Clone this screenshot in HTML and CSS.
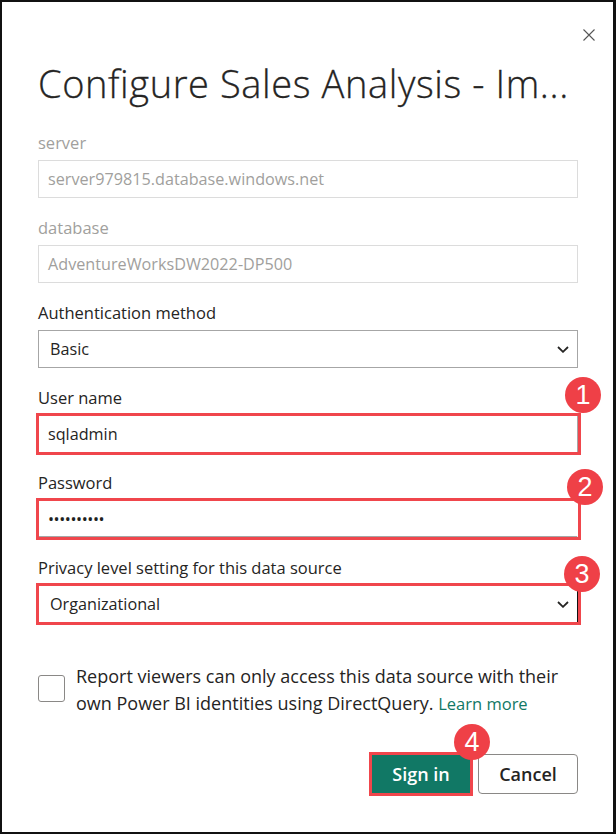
FILE: index.html
```html
<!DOCTYPE html>
<html lang="en">
<head>
<meta charset="utf-8">
<title>Configure Sales Analysis</title>
<link rel="stylesheet" href="styles.css">
</head>
<body>
<div class="dialog">
  <div class="close-row">
    <button class="close" aria-label="Close">
      <svg width="12" height="12" viewBox="0 0 12 12"><path d="M0.5 0.5 L11.5 11.5 M11.5 0.5 L0.5 11.5" stroke="#555" stroke-width="1.1" fill="none"/></svg>
    </button>
  </div>
  <h1 class="title">Configure Sales Analysis - Im...</h1>

  <div class="field">
    <div class="label muted">server</div>
    <div class="input disabled">server979815.database.windows.net</div>
  </div>
  <div class="field">
    <div class="label muted">database</div>
    <div class="input disabled">AdventureWorksDW2022-DP500</div>
  </div>
  <div class="field">
    <div class="label">Authentication method</div>
    <div class="input select">
      <span>Basic</span>
      <svg class="chev" width="12" height="7" viewBox="0 0 12 7"><path d="M1 1 L6 5.8 L11 1" stroke="#252423" stroke-width="1.8" fill="none"/></svg>
    </div>
  </div>
  <div class="field">
    <div class="label">User name</div>
    <div class="annot">
      <div class="input">sqladmin</div>
      <span class="hl"></span>
      <span class="badge b1">1</span>
    </div>
  </div>
  <div class="field">
    <div class="label">Password</div>
    <div class="annot">
      <div class="input password">••••••••••</div>
      <span class="hl"></span>
      <span class="badge b2">2</span>
    </div>
  </div>
  <div class="field">
    <div class="label">Privacy level setting for this data source</div>
    <div class="annot">
      <div class="input select focused">
        <span>Organizational</span>
        <svg class="chev" width="12" height="7" viewBox="0 0 12 7"><path d="M1 1 L6 5.8 L11 1" stroke="#252423" stroke-width="1.8" fill="none"/></svg>
      </div>
      <span class="hl"></span>
      <span class="badge b3">3</span>
    </div>
  </div>

  <div class="check-row">
    <span class="checkbox"></span>
    <p class="check-text">Report viewers can only access this data source with their own Power BI identities using DirectQuery. <a class="link" href="#">Learn more</a></p>
  </div>

  <div class="actions">
    <div class="annot">
      <button class="btn primary">Sign in</button>
      <span class="hl hl-btn"></span>
      <span class="badge b4">4</span>
    </div>
    <button class="btn secondary">Cancel</button>
  </div>
</div>
</body>
</html>
```

FILE: styles.css
```css
* { box-sizing: border-box; }
html, body { margin: 0; padding: 0; background: #fff; }
body { font-family: "Open Sans", "Noto Sans", sans-serif; color: #252423; }

.dialog {
  width: 616px;
  height: 834px;
  border: 2px solid #111;
  border-right-width: 3px;
  padding: 27px 35px 0 36px;
  display: flex;
  flex-direction: column;
  background: #fff;
}

.close-row { display: flex; justify-content: flex-end; height: 12px; margin-right: -17px; }
.close { border: 0; background: none; padding: 0; width: 12px; height: 12px; display: block; cursor: pointer; }
.close svg { display: block; }

.title {
  margin: 20px 0 28px;
  font-size: 38px;
  line-height: 44px;
  font-weight: 300;
  color: #252423;
  white-space: nowrap;
  letter-spacing: 0.6px;
  -webkit-text-stroke: 0.3px #252423;
}

.field { display: flex; flex-direction: column; margin-bottom: 20px; }
.label { font-size: 16.5px; line-height: 20px; margin-bottom: 7px; color: #252423; }
.label.muted { color: #a19f9d; }

.input {
  height: 38px;
  border: 1px solid #a6a6a6;
  padding: 0 9px;
  font-size: 16.2px;
  line-height: 36px;
  color: #252423;
  background: #fff;
  display: flex;
  align-items: center;
}
.input.disabled { border-color: #dcdcdc; color: #a19f9d; }
.input.select { justify-content: space-between; padding-right: 8px; padding-left: 11px; }
.input.focused { border-right-color: #111; border-bottom-color: #111; }
.input.password { letter-spacing: -0.4px; font-size: 16px; font-weight: 400; color: #201f1e; border-color: #fff; border-bottom: 2px solid #a6a6a6; }
.chev { display: block; }

.annot { position: relative; }
.hl {
  position: absolute;
  left: -2px; right: -3px; top: -2px; bottom: -2px;
  border: 3px solid #f0464c;
  pointer-events: none;
}
.badge {
  position: absolute;
  width: 36px; height: 36px;
  border-radius: 50%;
  background: #ef4047;
  color: #fff;
  font-size: 27px;
  line-height: 36px;
  text-align: center;
  font-family: "Liberation Sans", Arial, sans-serif;
}
.b1 { right: -23px; top: -38px; }
.b2 { right: -25px; top: -31px; }
.b3 { right: -22px; top: -29px; }
.b4 { right: -20px; top: -30px; }

.check-row { display: flex; align-items: flex-start; gap: 11px; margin-top: 20px; }
.checkbox {
  flex: none;
  width: 27px; height: 27px;
  margin-top: 12px;
  border: 1px solid #8a8886;
  border-radius: 3px;
}
.check-text { margin: 0; font-size: 18px; line-height: 27px; color: #252423; }
.link { color: #117865; text-decoration: none; font-size: 16.5px; }

.actions { display: flex; justify-content: flex-end; gap: 8px; margin-top: 37px; }
.btn {
  height: 40px;
  border-radius: 4px;
  font-family: "Open Sans", sans-serif;
  font-size: 18px;
  font-weight: 600;
  cursor: pointer;
  padding: 0;
}
.primary { width: 98px; background: #117865; color: #fff; border: 1px solid #117865; border-radius: 0; }
.secondary { width: 100px; background: #fff; color: #252423; border: 1px solid #8a8886; }
.hl-btn { left: -3px; right: -3px; top: -2px; bottom: -2px; }
```
